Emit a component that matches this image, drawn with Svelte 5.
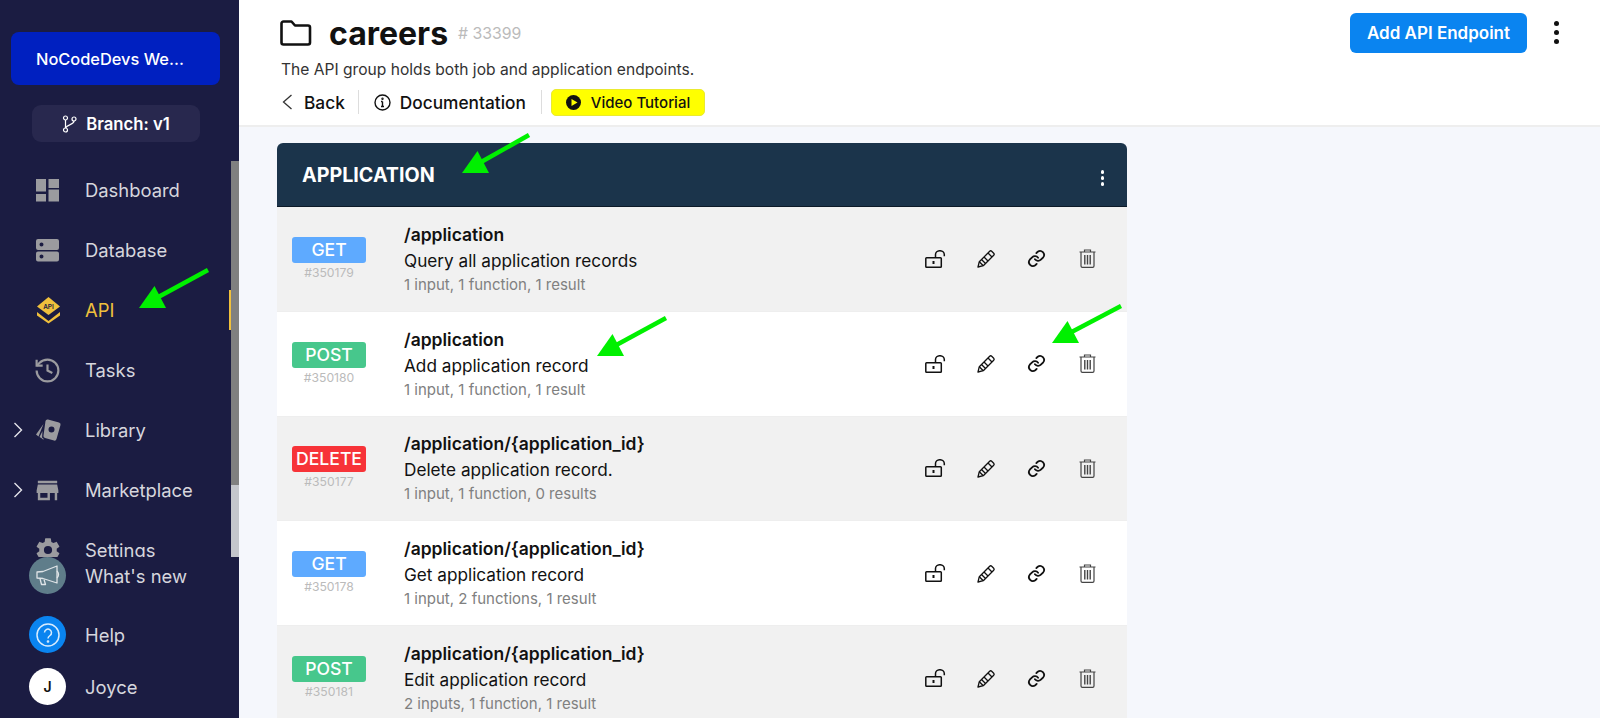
<script>
  const navItems = [
    { label: "Dashboard", icon: "dashboard" },
    { label: "Database", icon: "database" },
    { label: "API", icon: "api", active: true },
    { label: "Tasks", icon: "tasks" },
    { label: "Library", icon: "library", caret: true },
    { label: "Marketplace", icon: "store", caret: true },
    { label: "Settings", icon: "settings" }
  ];

  const endpoints = [
    { verb: "GET", id: "#350179", path: "/application", desc: "Query all application records", meta: "1 input, 1 function, 1 result" },
    { verb: "POST", id: "#350180", path: "/application", desc: "Add application record", meta: "1 input, 1 function, 1 result" },
    { verb: "DELETE", id: "#350177", path: "/application/{application_id}", desc: "Delete application record.", meta: "1 input, 1 function, 0 results" },
    { verb: "GET", id: "#350178", path: "/application/{application_id}", desc: "Get application record", meta: "1 input, 2 functions, 1 result" },
    { verb: "POST", id: "#350181", path: "/application/{application_id}", desc: "Edit application record", meta: "2 inputs, 1 function, 1 result" }
  ];

  // tail and tip of the green annotation arrows
  const arrows = [
    { x1: 529, y1: 135, x2: 462, y2: 173 },
    { x1: 208, y1: 270, x2: 139, y2: 308 },
    { x1: 666, y1: 318, x2: 597, y2: 356 },
    { x1: 1121, y1: 306, x2: 1052, y2: 343 }
  ];
</script>

<div class="app">
  <aside class="sidebar">
    <button class="org">NoCodeDevs We...</button>
    <button class="branch">
      <svg width="15" height="18" viewBox="0 0 15 18" fill="none" stroke="currentColor" stroke-width="1.200">
        <circle cx="3.500" cy="3" r="2"></circle>
        <circle cx="3.500" cy="15" r="2"></circle>
        <circle cx="12" cy="4" r="2"></circle>
        <path d="M3.500 5v8M12 6c0 4-6.500 3-8.500 7"></path>
      </svg>
      Branch: v1
    </button>

    <div class="nav-wrap">
      <nav class="nav">
        {#each navItems as item}
          <div class="nav-item" class:active={item.active}>
            {#if item.caret}
              <svg class="caret" width="10" height="16" viewBox="0 0 10 16" fill="none" stroke="currentColor" stroke-width="1.400"><path d="M1.500 1l7 7-7 7"></path></svg>
            {/if}
            <span class="nav-icon">
              {#if item.icon === "dashboard"}
                <svg width="24" height="23" viewBox="0 0 24 23" fill="#9b9b9f">
                  <rect x="0" y="0" width="10" height="12.500"></rect>
                  <rect x="0" y="15" width="10" height="7.500"></rect>
                  <rect x="12.500" y="0" width="10.500" height="9"></rect>
                  <rect x="12.500" y="10.500" width="10.500" height="12"></rect>
                </svg>
              {:else if item.icon === "database"}
                <svg width="24" height="23" viewBox="0 0 24 23" fill="#9b9b9f">
                  <path fill-rule="evenodd" d="M2 0h19a2 2 0 0 1 2 2v7a2 2 0 0 1-2 2H2a2 2 0 0 1-2-2V2a2 2 0 0 1 2-2zm3.500 3.500a2 2 0 1 0 0 4 2 2 0 0 0 0-4z"></path>
                  <path fill-rule="evenodd" d="M2 12.500h19a2 2 0 0 1 2 2v6a2 2 0 0 1-2 2H2a2 2 0 0 1-2-2v-6a2 2 0 0 1 2-2zm3.500 3a2 2 0 1 0 0 4 2 2 0 0 0 0-4z"></path>
                </svg>
              {:else if item.icon === "api"}
                <svg width="25" height="27" viewBox="0 0 25 27">
                  <path d="M12.500 0L24 9.500 12.500 18 1 9.500z" fill="#f0c03c"></path>
                  <text x="12.500" y="12" text-anchor="middle" class="api-glyph">API</text>
                  <path d="M1 15l11.500 9L24 15v3.500L12.500 26.500 1 18.500z" fill="#f0c03c"></path>
                </svg>
              {:else if item.icon === "tasks"}
                <svg class="wide-icon" width="29" height="29" viewBox="0 0 24 24" fill="none" stroke="#9b9b9f" stroke-width="1.800">
                  <path d="M3 12a9 9 0 1 0 9-9 9.750 9.750 0 0 0-6.740 2.740L3 8"></path>
                  <path d="M3 3v5h5"></path>
                  <path d="M12 7v5l4 2"></path>
                </svg>
              {:else if item.icon === "library"}
                <svg width="26" height="23" viewBox="0 0 26 23">
                  <path fill="#9b9b9f" fill-rule="evenodd" d="M12 .6l11 3q2 .6 1.500 2.500l-4 14q-.6 2-2.500 1.500l-9-2.600q-2-.6-1.500-2.500L9.500 2.100Q10 .1 12 .6zm3.500 7a3 3 0 1 0 0 6 3 3 0 0 0 0-6z"></path>
                  <path fill="#9b9b9f" d="M7.500 5L0 15.500l2.500 2zM6.500 12L3.500 18l2.500 1.500zM6.500 18.500l-.5 1.500 2 .5z"></path>
                </svg>
              {:else if item.icon === "store"}
                <svg class="wide-icon" width="29" height="29" viewBox="0 0 24 24" fill="#9b9b9f">
                  <path d="M12 18H6V14H12M21 14V12L20 7H4L3 12V14H4V20H14V14H18V20H20V14M20 4H4V6H20V4Z"></path>
                </svg>
              {:else if item.icon === "settings"}
                <svg class="gear-icon" width="28" height="28" viewBox="0 0 24 24" fill="#9b9b9f">
                  <path d="M12,15.500A3.500,3.500 0 0,1 8.500,12A3.500,3.500 0 0,1 12,8.500A3.500,3.500 0 0,1 15.500,12A3.500,3.500 0 0,1 12,15.500M19.430,12.970C19.470,12.650 19.500,12.330 19.500,12C19.500,11.670 19.470,11.340 19.430,11L21.540,9.370C21.730,9.220 21.780,8.950 21.660,8.730L19.660,5.270C19.540,5.050 19.270,4.960 19.050,5.050L16.560,6.050C16.040,5.660 15.500,5.320 14.870,5.070L14.500,2.420C14.460,2.180 14.250,2 14,2H10C9.750,2 9.540,2.180 9.500,2.420L9.130,5.070C8.500,5.320 7.960,5.660 7.440,6.050L4.950,5.050C4.730,4.960 4.460,5.050 4.340,5.270L2.340,8.730C2.210,8.950 2.270,9.220 2.460,9.370L4.570,11C4.530,11.340 4.500,11.670 4.500,12C4.500,12.330 4.530,12.650 4.570,12.970L2.460,14.630C2.270,14.780 2.210,15.050 2.340,15.270L4.340,18.730C4.460,18.950 4.730,19.030 4.950,18.950L7.440,17.940C7.960,18.340 8.500,18.680 9.130,18.930L9.500,21.580C9.540,21.820 9.750,22 10,22H14C14.250,22 14.460,21.820 14.500,21.580L14.870,18.930C15.500,18.670 16.040,18.340 16.560,17.940L19.050,18.950C19.270,19.030 19.540,18.950 19.660,18.730L21.660,15.270C21.780,15.050 21.730,14.780 21.540,14.630L19.430,12.970Z"></path>
                </svg>
              {/if}
            </span>
            <span class:active-label={item.active}>{item.label}</span>
            {#if item.active}<span class="active-bar"></span>{/if}
          </div>
        {/each}
      </nav>
      <div class="scroll-track"><div class="scroll-thumb"></div></div>
    </div>

    <div class="foot">
      <div class="foot-item">
        <span class="round round-news">
          <svg width="26" height="24" viewBox="0 0 26 24" fill="none" stroke="#dfe4e7" stroke-width="1.300" stroke-linejoin="round">
            <path d="M2 8l6-.5L22 2v17L8 14.500l-6-.5z"></path>
            <path d="M22 7q3 3.500 0 7"></path>
            <path d="M5 14.500l1.500 6 4 0-1.500-5"></path>
          </svg>
        </span>
        <span>What's new</span>
      </div>
      <div class="foot-item">
        <span class="round round-help">
          <svg width="24" height="24" viewBox="0 0 24 24" fill="none" stroke="#d9ecfd" stroke-width="1.500">
            <circle cx="12" cy="12" r="11"></circle>
            <path d="M8.500 9.500a3.500 3.500 0 1 1 5.500 3c-1.300.9-2 1.400-2 3"></path>
            <circle cx="12" cy="18.500" r=".6"></circle>
          </svg>
        </span>
        <span>Help</span>
      </div>
      <div class="foot-item foot-user">
        <span class="round round-user">J</span>
        <span>Joyce</span>
      </div>
    </div>
  </aside>

  <main class="main">
    <header class="header">
      <div class="title-row">
        <svg class="folder" width="32" height="26" viewBox="0 0 32 26" fill="none" stroke="#111" stroke-width="2.600" stroke-linejoin="round">
          <path d="M1.500 3.500a2 2 0 0 1 2-2h8l3.500 4h13a2 2 0 0 1 2 2v15a2 2 0 0 1-2 2h-24.500a2 2 0 0 1-2-2z"></path>
        </svg>
        <h1>careers</h1>
        <span class="group-id"># 33399</span>
      </div>
      <p class="group-desc">The API group holds both job and application endpoints.</p>
      <div class="links">
        <span class="link-item back">
          <svg width="11" height="16" viewBox="0 0 11 16" fill="none" stroke="#333" stroke-width="1.300"><path d="M9.500 1l-8 7 8 7"></path></svg>
          Back
        </span>
        <span class="sep first"></span>
        <span class="link-item">
          <svg width="17" height="17" viewBox="0 0 17 17" fill="none" stroke="#111" stroke-width="1.400">
            <circle cx="8.500" cy="8.500" r="7.500"></circle>
            <path d="M8.500 7.500v5M7 12.500h3M7 7.500h1.500"></path>
            <circle cx="8.500" cy="4.800" r=".5"></circle>
          </svg>
          Documentation
        </span>
        <span class="sep"></span>
        <span class="video">
          <svg width="15" height="15" viewBox="0 0 15 15">
            <circle cx="7.500" cy="7.500" r="7.500" fill="#111"></circle>
            <path d="M5.500 4l6 3.500-6 3.500z" fill="#ffff00"></path>
          </svg>
          Video Tutorial
        </span>
      </div>
      <button class="add">Add API Endpoint</button>
      <span class="more"><i></i><i></i><i></i></span>
    </header>

    <section class="content">
      <div class="card">
        <div class="card-head">
          <span>APPLICATION</span>
          <span class="more small"><i></i><i></i><i></i></span>
        </div>
        {#each endpoints as row}
          <div class="row">
            <div class="verb-col">
              <span class="verb {row.verb.toLowerCase()}">{row.verb}</span>
              <span class="row-id">{row.id}</span>
            </div>
            <div class="row-text">
              <div class="row-path">{row.path}</div>
              <div class="row-desc">{row.desc}</div>
              <div class="row-meta">{row.meta}</div>
            </div>
            <div class="row-actions">
              <svg width="21" height="18" viewBox="0 0 21 18" fill="none" stroke="#111" stroke-width="1.500">
                <rect x=".8" y="7.800" width="15.500" height="9.400" rx=".8"></rect>
                <path d="M8.500 11v3" stroke-width="2"></path>
                <path d="M10.500 7.800V4.500a4.300 3.700 0 0 1 8.800 0v1.800"></path>
              </svg>
              <svg width="19" height="19" viewBox="0 0 19 19" fill="none" stroke="#111" stroke-width="1.300" stroke-linejoin="round">
                <path d="M1 18l1.300-5.300L12.700 2.300q1-1 2 0l2 2q1 1 0 2L6.300 16.700z"></path>
                <path d="M2.300 12.700l4 4M11 4l4 4M4.500 10.500l4 4M7 8l4 4"></path>
              </svg>
              <svg width="19" height="19" viewBox="0 0 24 24" fill="none" stroke="#111" stroke-width="2.300" stroke-linecap="round">
                <path d="M10 13a5 5 0 0 0 7.500.5l3-3a5 5 0 0 0-7-7l-1.700 1.700"></path>
                <path d="M14 11a5 5 0 0 0-7.500-.5l-3 3a5 5 0 0 0 7 7l1.700-1.700"></path>
              </svg>
              <svg width="17" height="19" viewBox="0 0 17 19" fill="none" stroke="#444" stroke-width="1.200">
                <path d="M.5 3h16M5.500 3V1h6v2"></path>
                <path d="M2 3v14q0 1.400 1.400 1.400h10.200q1.400 0 1.400-1.400V3"></path>
                <path d="M5.800 6v9.500M8.500 6v9.500M11.200 6v9.500" stroke-width="1.400"></path>
              </svg>
            </div>
          </div>
        {/each}
      </div>
    </section>
  </main>

  <svg class="arrows" width="1600" height="718" viewBox="0 0 1600 718">
    {#each arrows as a}
      <line x1={a.x1} y1={a.y1} x2={a.x2 + 12} y2={a.y2 - 7} stroke="#00f000" stroke-width="4.500"></line>
      <polygon points="{a.x2},{a.y2} {a.x2 + 15.500},{a.y2 - 22} {a.x2 + 27},{a.y2}" fill="#00f000"></polygon>
    {/each}
  </svg>
</div>

<style>
  :global(body) {
    font-family: Inter, "Liberation Sans", sans-serif;
    background: #f5f7fc;
  }

  .app {
    position: relative;
    display: flex;
    width: 1600px;
    height: 718px;
    overflow: hidden;
  }

  .sidebar {
    display: flex;
    flex-direction: column;
    width: 239px;
    flex: none;
    background: #1b1c42;
    color: #d6d6dd;
  }

  .sidebar > * {
    flex: none;
  }

  button {
    font-family: inherit;
    border: 0;
    color: #fff;
  }

  .org {
    width: 209px;
    height: 53px;
    margin: 32px 0 0 11px;
    padding: 0 0 0 25px;
    text-align: left;
    font-size: 16.400px;
    font-weight: 500;
    background: #0020c0;
    border-radius: 8px;
  }

  .branch {
    display: flex;
    align-items: center;
    justify-content: center;
    gap: 9px;
    width: 168px;
    height: 37px;
    margin: 20px 0 0 32px;
    font-size: 16.700px;
    font-weight: 600;
    background: #28284e;
    border-radius: 9px;
  }

  .nav-wrap {
    position: relative;
    height: 397px;
    margin-top: 18px;
    overflow: hidden;
  }

  .nav-item {
    position: relative;
    display: flex;
    align-items: center;
    height: 60px;
    padding-left: 85px;
    font-size: 18.400px;
  }

  .nav-icon {
    position: absolute;
    left: 36px;
    top: 0;
    bottom: 0;
    display: flex;
    align-items: center;
  }

  .wide-icon {
    margin-left: -3px;
  }

  .gear-icon {
    margin-left: -2px;
  }

  .caret {
    position: absolute;
    left: 13px;
    top: 22px;
    color: #e4e4ea;
  }

  .api-glyph {
    font-size: 6.500px;
    font-weight: 600;
    fill: #1b1c42;
  }

  .active-label {
    color: #f0c03c;
  }

  .active-bar {
    position: absolute;
    left: 229px;
    top: 10px;
    width: 2px;
    height: 40px;
    background: #f0c03c;
  }

  .scroll-track {
    position: absolute;
    left: 231px;
    top: 1px;
    bottom: 0;
    width: 8px;
    background: #c4c6cc;
  }

  .scroll-thumb {
    height: 324px;
    background: #808080;
  }

  .foot-item {
    display: flex;
    align-items: center;
    height: 37px;
    margin-bottom: 22px;
    padding-left: 29px;
    gap: 19px;
    font-size: 18.400px;
  }

  .foot-item + .foot-user {
    margin-top: -7px;
    margin-bottom: 0;
  }

  .round {
    display: flex;
    align-items: center;
    justify-content: center;
    width: 37px;
    height: 37px;
    border-radius: 50%;
    flex: none;
  }

  .round-news {
    background: #5f7d8a;
  }

  .round-help {
    background: #0a84f0;
  }

  .round-user {
    background: #fff;
    color: #111;
    font-size: 14px;
    font-weight: 600;
  }

  .main {
    display: flex;
    flex-direction: column;
    flex: 1;
    min-width: 0;
  }

  .header {
    position: relative;
    flex: none;
    height: 127px;
    padding: 13px 0 0 41px;
    box-sizing: border-box;
    background: #fff;
    border-bottom: 2px solid #eee;
  }

  .title-row {
    display: flex;
    align-items: center;
    height: 40px;
  }

  .folder {
    margin-right: 17px;
  }

  h1 {
    margin: 0;
    font-size: 32px;
    font-weight: 700;
    color: #111;
  }

  .group-id {
    margin-left: 10px;
    font-size: 15.800px;
    color: #bbb;
  }

  .group-desc {
    margin: 7px 0 0 1px;
    font-size: 15.600px;
    line-height: 20px;
    color: #333;
  }

  .links {
    display: flex;
    align-items: center;
    height: 28px;
    margin-top: 8px;
    font-size: 17.300px;
    font-weight: 500;
    color: #111;
  }

  .link-item {
    display: flex;
    align-items: center;
    gap: 9px;
  }

  .back {
    gap: 11px;
    margin-left: 2px;
  }

  .sep {
    width: 1px;
    height: 24px;
    margin: 0 15px;
    background: #ddd;
  }

  .sep.first {
    margin-left: 13px;
  }

  .video {
    display: flex;
    align-items: center;
    gap: 10px;
    height: 27px;
    margin-left: -6px;
    padding: 0 14px;
    font-size: 15px;
    background: #ffff00;
    border: 1px solid #eaea30;
    border-radius: 5px;
    box-sizing: border-box;
  }

  .add {
    position: absolute;
    right: 73px;
    top: 13px;
    width: 177px;
    height: 40px;
    font-size: 17px;
    font-weight: 600;
    background: #0a84f0;
    border-radius: 6px;
  }

  .more {
    position: absolute;
    right: 41px;
    top: 21px;
    display: flex;
    flex-direction: column;
    gap: 4px;
  }

  .more i {
    width: 5px;
    height: 5px;
    background: #111;
    border-radius: 50%;
  }

  .more.small {
    right: 23px;
    top: 27px;
    gap: 2.500px;
  }

  .more.small i {
    width: 3.500px;
    height: 3.500px;
    background: #fff;
  }

  .content {
    flex: 1;
    padding: 16px 0 0 38px;
  }

  .card {
    width: 850px;
  }

  .card-head {
    position: relative;
    display: flex;
    align-items: center;
    height: 64px;
    padding: 1px 0 0 25px;
    box-sizing: border-box;
    font-size: 19.700px;
    font-weight: 700;
    color: #fff;
    background: #1b344b;
    border-bottom: 1px solid #0c1a28;
    border-radius: 6px 6px 0 0;
  }

  .row {
    display: flex;
    align-items: center;
    height: 104.800px;
    box-sizing: border-box;
    background: #fff;
    border-bottom: 1px solid #eee;
  }

  .row:nth-child(even) {
    background: #f1f1f1;
  }

  .verb-col {
    display: flex;
    flex-direction: column;
    align-items: center;
    width: 74px;
    margin-left: 15px;
  }

  .verb {
    width: 74px;
    height: 26px;
    overflow: hidden;
    text-align: center;
    white-space: nowrap;
    font-size: 17.600px;
    font-weight: 500;
    line-height: 26px;
    color: #fff;
    border-radius: 3px;
  }

  .verb.get {
    background: #5eaaff;
  }

  .verb.post {
    background: #47c78c;
  }

  .verb.delete {
    background: #f73338;
  }

  .row-id {
    margin-top: 2px;
    font-size: 12.200px;
    line-height: 16px;
    color: #bbb;
  }

  .row-text {
    flex: 1;
    margin-left: 38px;
  }

  .row-path {
    font-size: 17.500px;
    font-weight: 600;
    line-height: 26px;
    color: #111;
  }

  .row-desc {
    font-size: 17.200px;
    line-height: 26px;
    color: #111;
  }

  .row-meta {
    font-size: 15px;
    line-height: 22px;
    color: #808080;
  }

  .row-actions {
    display: grid;
    grid-template-columns: repeat(4, 50.700px);
    justify-items: center;
    align-items: center;
    flex: none;
    margin-right: 14px;
  }

  .arrows {
    position: absolute;
    left: 0;
    top: 0;
    pointer-events: none;
  }
</style>
